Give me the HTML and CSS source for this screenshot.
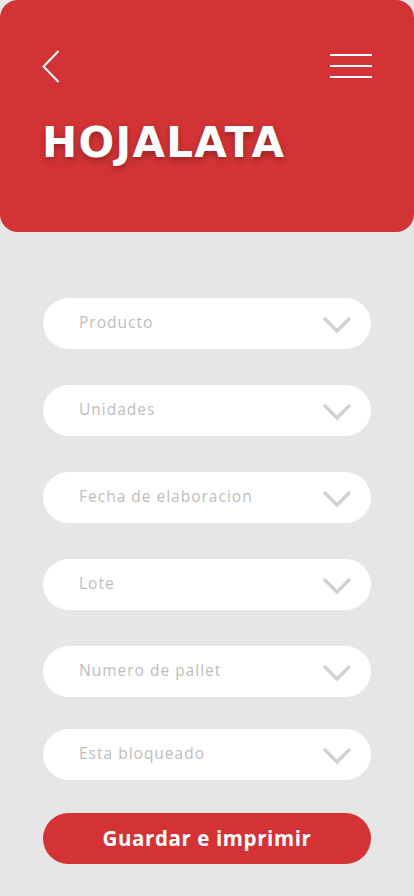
FILE: index.html
```html
<!DOCTYPE html>
<html lang="es">
<head>
<meta charset="utf-8">
<title>Hojalata</title>
<link rel="stylesheet" href="styles.css">
</head>
<body>
<header class="header">
  <div class="topbar">
    <svg class="back" width="18" height="33" viewBox="0 0 18 33"><path d="M16.5 1 L1.5 16.5 L16.5 32" fill="none" stroke="#fff" stroke-width="2"/></svg>
    <svg class="menu" width="42" height="26" viewBox="0 0 42 26"><path d="M0 2H42M0 13H42M0 24H42" stroke="#fff" stroke-width="2"/></svg>
  </div>
  <h1 class="title">HOJALATA</h1>
</header>
<main class="form">
  <div class="field"><span class="label">Producto</span><svg class="chev" width="30" height="18" viewBox="0 0 30 18"><path d="M2 2 L15 15 L28 2" fill="none" stroke="#d2d2d2" stroke-width="3.5"/></svg></div>
  <div class="field"><span class="label">Unidades</span><svg class="chev" width="30" height="18" viewBox="0 0 30 18"><path d="M2 2 L15 15 L28 2" fill="none" stroke="#d2d2d2" stroke-width="3.5"/></svg></div>
  <div class="field"><span class="label">Fecha de elaboracion</span><svg class="chev" width="30" height="18" viewBox="0 0 30 18"><path d="M2 2 L15 15 L28 2" fill="none" stroke="#d2d2d2" stroke-width="3.5"/></svg></div>
  <div class="field"><span class="label">Lote</span><svg class="chev" width="30" height="18" viewBox="0 0 30 18"><path d="M2 2 L15 15 L28 2" fill="none" stroke="#d2d2d2" stroke-width="3.5"/></svg></div>
  <div class="field"><span class="label">Numero de pallet</span><svg class="chev" width="30" height="18" viewBox="0 0 30 18"><path d="M2 2 L15 15 L28 2" fill="none" stroke="#d2d2d2" stroke-width="3.5"/></svg></div>
  <div class="field field-close"><span class="label">Esta bloqueado</span><svg class="chev" width="30" height="18" viewBox="0 0 30 18"><path d="M2 2 L15 15 L28 2" fill="none" stroke="#d2d2d2" stroke-width="3.5"/></svg></div>
  <button class="save">Guardar e imprimir</button>
</main>
</body>
</html>
```
FILE: styles.css
```css
* { box-sizing: border-box; }
html, body { margin: 0; padding: 0; }
body {
  width: 414px;
  height: 896px;
  background: #e6e6e6;
  font-family: "Open Sans", "Noto Sans", sans-serif;
  overflow: hidden;
}
.header {
  height: 232px;
  background: #d33335;
  border-radius: 18px;
  padding: 50px 42px 0 42px;
}
.topbar {
  display: flex;
  justify-content: space-between;
  align-items: flex-start;
}
.back { display: block; }
.menu { display: block; margin-top: 3px; }
.title {
  margin: 35px 0 0 0;
  color: #fff;
  font-family: "DejaVu Sans", sans-serif;
  font-weight: bold;
  font-size: 42px;
  letter-spacing: 1.3px;
  line-height: 50px;
  text-shadow: 0 3px 6px rgba(0,0,0,0.3);
}
.form {
  padding: 66px 43px 0 43px;
  display: flex;
  flex-direction: column;
  gap: 36px;
}
.field {
  height: 51px;
  background: #fff;
  border-radius: 26px;
  display: flex;
  align-items: center;
  justify-content: space-between;
  padding: 0 19px 0 36px;
}
.field-close { margin-top: -4px; }
.label {
  color: #bdbdbd;
  font-size: 15.5px;
  letter-spacing: 1px;
  margin-top: -3px;
}
.chev { display: block; margin-top: 2px; }
.save {
  margin-top: -3px;
  height: 51px;
  border: none;
  border-radius: 26px;
  background: #d33335;
  color: #fff;
  font-family: "Open Sans", "Noto Sans", sans-serif;
  font-weight: bold;
  font-size: 20.5px;
  letter-spacing: 0.6px;
  padding-bottom: 2px;
}
```
